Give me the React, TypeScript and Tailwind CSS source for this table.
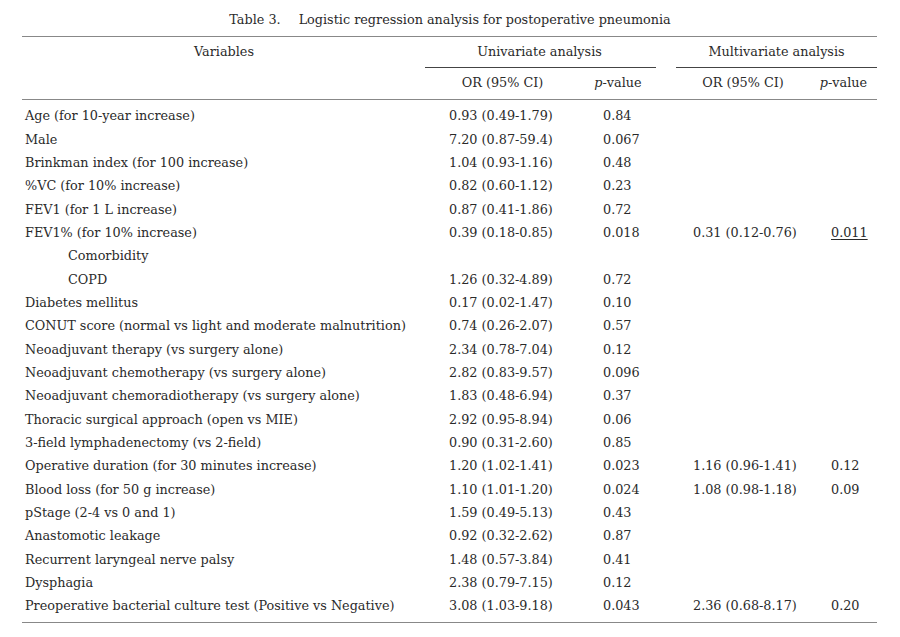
import React from "react";

type Row = { v: string; indent?: boolean; or1?: string; p1?: string; or2?: string; p2?: string; u?: boolean };

const rows: Row[] = [
  { v: "Age (for 10-year increase)", or1: "0.93 (0.49-1.79)", p1: "0.84" },
  { v: "Male", or1: "7.20 (0.87-59.4)", p1: "0.067" },
  { v: "Brinkman index (for 100 increase)", or1: "1.04 (0.93-1.16)", p1: "0.48" },
  { v: "%VC (for 10% increase)", or1: "0.82 (0.60-1.12)", p1: "0.23" },
  { v: "FEV1 (for 1 L increase)", or1: "0.87 (0.41-1.86)", p1: "0.72" },
  { v: "FEV1% (for 10% increase)", or1: "0.39 (0.18-0.85)", p1: "0.018", or2: "0.31 (0.12-0.76)", p2: "0.011", u: true },
  { v: "Comorbidity", indent: true },
  { v: "COPD", indent: true, or1: "1.26 (0.32-4.89)", p1: "0.72" },
  { v: "Diabetes mellitus", or1: "0.17 (0.02-1.47)", p1: "0.10" },
  { v: "CONUT score (normal vs light and moderate malnutrition)", or1: "0.74 (0.26-2.07)", p1: "0.57" },
  { v: "Neoadjuvant therapy (vs surgery alone)", or1: "2.34 (0.78-7.04)", p1: "0.12" },
  { v: "Neoadjuvant chemotherapy (vs surgery alone)", or1: "2.82 (0.83-9.57)", p1: "0.096" },
  { v: "Neoadjuvant chemoradiotherapy (vs surgery alone)", or1: "1.83 (0.48-6.94)", p1: "0.37" },
  { v: "Thoracic surgical approach (open vs MIE)", or1: "2.92 (0.95-8.94)", p1: "0.06" },
  { v: "3-field lymphadenectomy (vs 2-field)", or1: "0.90 (0.31-2.60)", p1: "0.85" },
  { v: "Operative duration (for 30 minutes increase)", or1: "1.20 (1.02-1.41)", p1: "0.023", or2: "1.16 (0.96-1.41)", p2: "0.12" },
  { v: "Blood loss (for 50 g increase)", or1: "1.10 (1.01-1.20)", p1: "0.024", or2: "1.08 (0.98-1.18)", p2: "0.09" },
  { v: "pStage (2-4 vs 0 and 1)", or1: "1.59 (0.49-5.13)", p1: "0.43" },
  { v: "Anastomotic leakage", or1: "0.92 (0.32-2.62)", p1: "0.87" },
  { v: "Recurrent laryngeal nerve palsy", or1: "1.48 (0.57-3.84)", p1: "0.41" },
  { v: "Dysphagia", or1: "2.38 (0.79-7.15)", p1: "0.12" },
  { v: "Preoperative bacterial culture test (Positive vs Negative)", or1: "3.08 (1.03-9.18)", p1: "0.043", or2: "2.36 (0.68-8.17)", p2: "0.20" },
];

const cols = "grid grid-cols-[403px_155px_76px_20px_134px_67px]";

export default function App() {
  return (
    <div
      className="w-[900px] h-[637px] bg-white text-[#2a2a2a] text-[12.8px] leading-none"
      style={{ fontFamily: '"DejaVu Serif", serif' }}
    >
      <div className="pt-[14px] h-[36px] text-center">
        <span>Table 3.</span>
        <span className="ml-[18px]">Logistic regression analysis for postoperative pneumonia</span>
      </div>
      <div className="ml-[22px] w-[855px] border-t border-[#888]">
        <div className={cols}>
          <div className="row-span-2 h-[31px] flex items-center justify-center pl-[1px] pb-[1px]">Variables</div>
          <div className="col-span-2 h-[31px] flex items-center justify-center border-b border-[#444] pr-[2px]">Univariate analysis</div>
          <div />
          <div className="col-span-2 h-[31px] flex items-center justify-center border-b border-[#444]">Multivariate analysis</div>
          <div className="col-start-2 h-[31px] flex items-center justify-center">OR (95% CI)</div>
          <div className="h-[31px] flex items-center justify-center"><span><i>p</i>-value</span></div>
          <div />
          <div className="h-[31px] flex items-center justify-center">OR (95% CI)</div>
          <div className="h-[31px] flex items-center justify-center"><span><i>p</i>-value</span></div>
        </div>
        <div className="border-t border-[#888] pt-[5px] pb-[4px] border-b">
          {rows.map((r, i) => (
            <div key={i} className={`${cols} h-[23.33px] items-center`}>
              <div className={r.indent ? "pl-[46px]" : "pl-[3px]"}>{r.v}</div>
              <div className="pl-[24px]">{r.or1}</div>
              <div className="pl-[23px]">{r.p1}</div>
              <div />
              <div className="pl-[17px]">{r.or2}</div>
              <div className="pl-[21px]">{r.u ? <span className="underline underline-offset-2">{r.p2}</span> : r.p2}</div>
            </div>
          ))}
        </div>
      </div>
    </div>
  );
}
